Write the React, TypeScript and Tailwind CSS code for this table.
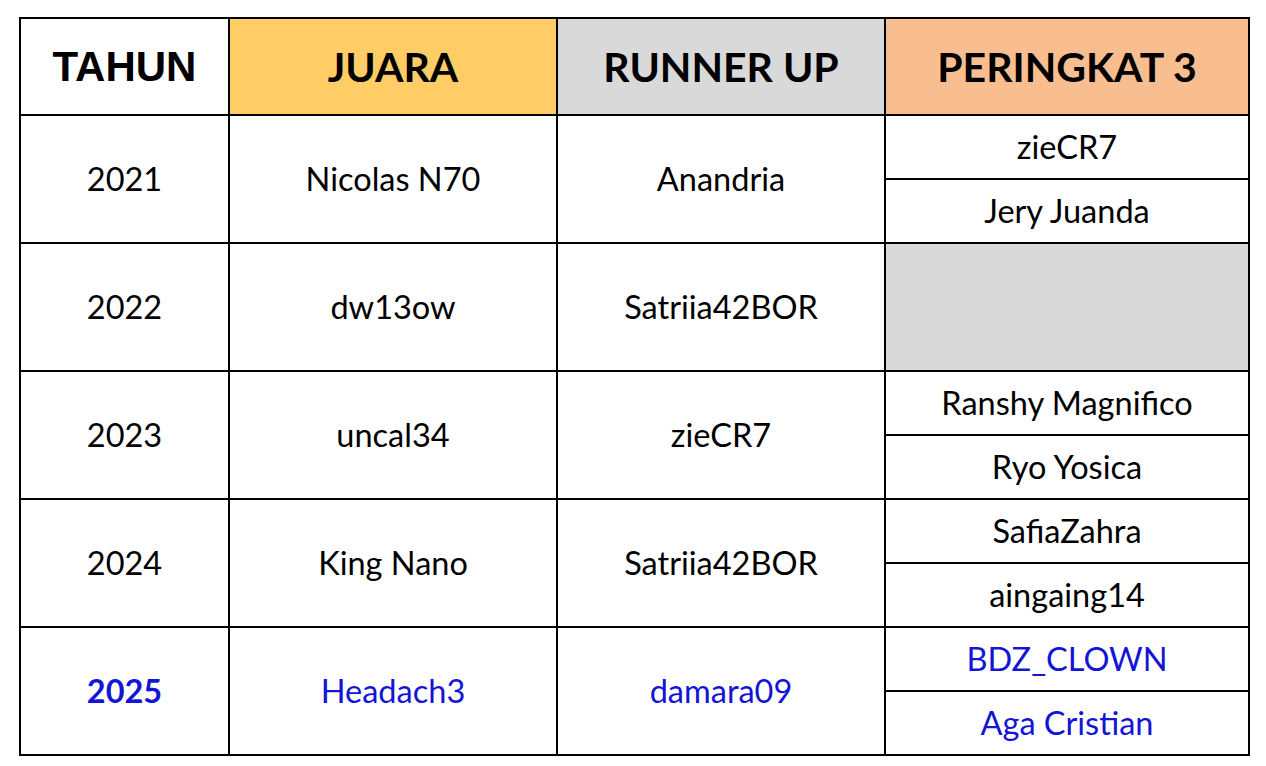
const rows = [
  { year: '2021', juara: 'Nicolas N70', runner: 'Anandria', third: ['zieCR7', 'Jery Juanda'] },
  { year: '2022', juara: 'dw13ow', runner: 'Satriia42BOR', third: [] },
  { year: '2023', juara: 'uncal34', runner: 'zieCR7', third: ['Ranshy Magnifico', 'Ryo Yosica'] },
  { year: '2024', juara: 'King Nano', runner: 'Satriia42BOR', third: ['SafiaZahra', 'aingaing14'] },
  { year: '2025', juara: 'Headach3', runner: 'damara09', third: ['BDZ_CLOWN', 'Aga Cristian'], current: true },
];

const cell = 'border-2 border-black text-center align-middle p-0';

export default function App() {
  return (
    <div className="bg-white w-[1266px] h-[766px] pt-[17px] pl-[19px] font-['Lato','Open_Sans',sans-serif]">
      <table className="border-collapse w-[1229px] table-fixed text-[32.5px] text-black">
        <colgroup>
          <col className="w-[209px]" />
          <col className="w-[328px]" />
          <col className="w-[328px]" />
          <col className="w-[364px]" />
        </colgroup>
        <thead>
          <tr className="h-[97px] font-bold text-[41px]">
            <th className={`${cell} font-['Liberation_Sans',Arial,sans-serif] text-[42px]`}>TAHUN</th>
            <th className={`${cell} bg-[#ffcc66]`}>JUARA</th>
            <th className={`${cell} bg-[#d9d9d9]`}>RUNNER UP</th>
            <th className={`${cell} bg-[#f8be90]`}>PERINGKAT 3</th>
          </tr>
        </thead>
        <tbody>
          {rows.map((r) => {
            const color = r.current ? 'text-[#1414d8]' : '';
            return [
              <tr key={r.year + 'a'} className="h-[64px]">
                <td rowSpan={2} className={`${cell} ${color} ${r.current ? 'font-bold' : ''}`}>{r.year}</td>
                <td rowSpan={2} className={`${cell} ${color}`}>{r.juara}</td>
                <td rowSpan={2} className={`${cell} ${color}`}>{r.runner}</td>
                {r.third.length ? (
                  <td className={`${cell} ${color}`}>{r.third[0]}</td>
                ) : (
                  <td rowSpan={2} className={`${cell} bg-[#d9d9d9]`} />
                )}
              </tr>,
              <tr key={r.year + 'b'} className="h-[64px]">
                {r.third.length > 1 && <td className={`${cell} ${color}`}>{r.third[1]}</td>}
              </tr>,
            ];
          })}
        </tbody>
      </table>
    </div>
  );
}
